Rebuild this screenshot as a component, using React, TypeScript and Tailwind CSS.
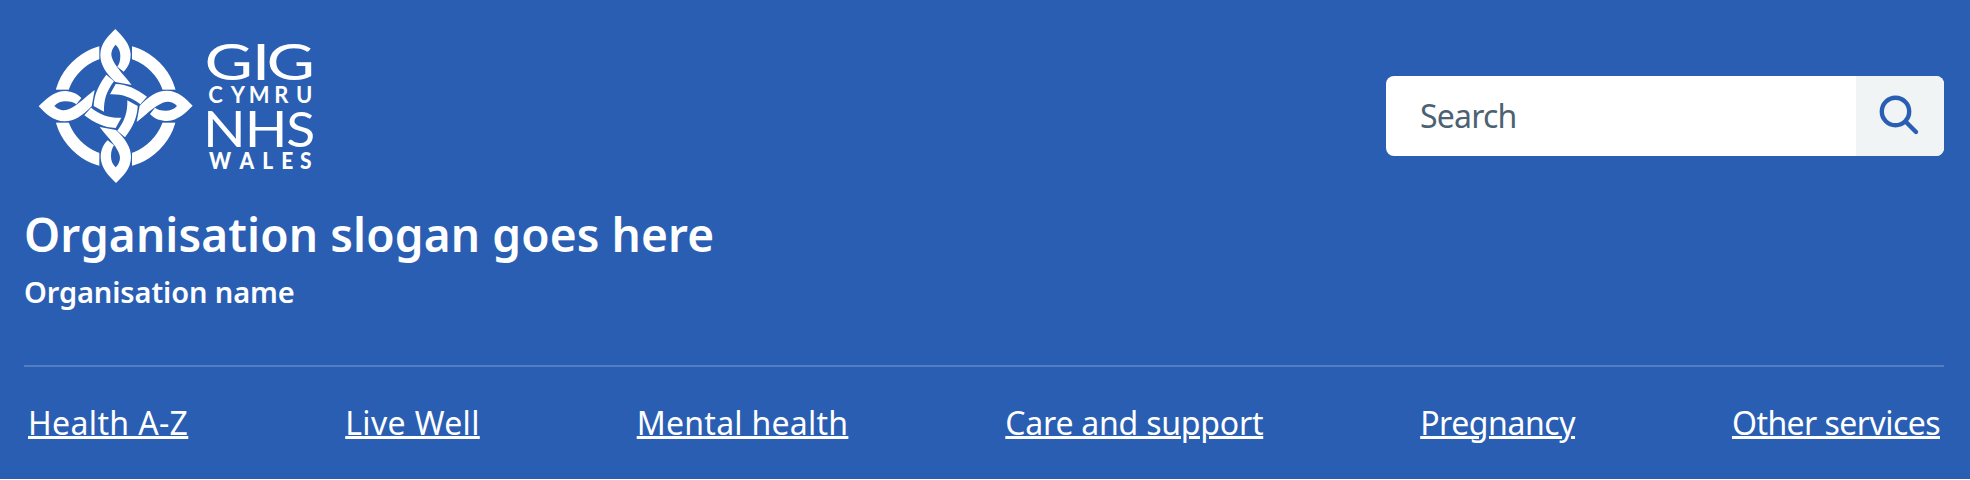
const links = [
  { label: "Health A-Z", tracking: "tracking-[0.36px]" },
  { label: "Live Well", tracking: "tracking-[0.36px]" },
  { label: "Mental health", tracking: "tracking-[0.26px]" },
  { label: "Care and support", tracking: "tracking-[-0.22px]" },
  { label: "Pregnancy", tracking: "tracking-[-0.44px]" },
  { label: "Other services", tracking: "tracking-[-0.55px]" },
];

function Petal() {
  return (
    <>
      <path
        d="M286 42 C266 62 241 84 241 120 C241 150 258 174 286 201 L335 210 C322 192 300 170 287 150 C276 132 272 121 275 110 C277 101 281 95 287 89 C297 98 301 110 301 122 C301 138 297 148 292 155 L311 170 C326 156 332 138 332 118 C330 86 308 64 286 42 Z"
        fill="#fff"
      />
      <path d="M270 238 L287 207 C322 208 350 222 381 245 L361 268 C332 246 306 237 270 238 Z" fill="#fff" />
    </>
  );
}

function Logo() {
  return (
    <svg className="h-[180px] w-[310px]" viewBox="0 0 930 540" aria-label="GIG Cymru NHS Wales">
      <circle cx="287" cy="273" r="167" fill="none" stroke="#fff" strokeWidth="37" />
      <g fill="#295eb3">
        <path d="M238 85h98v75h-98z" />
        <path d="M238 386h98v75h-98z" />
        <path d="M98 224h77v99h-77z" />
        <path d="M400 224h77v99h-77z" />
      </g>
      <Petal />
      <g transform="rotate(90 287 273)"><Petal /></g>
      <g transform="rotate(180 287 273)"><Petal /></g>
      <g transform="rotate(270 287 273)"><Petal /></g>
      <g fill="#fff" fontFamily="Lato, sans-serif">
        <text transform="scale(1.3 1)" x="426 535 569" y="196" fontSize="153">GIG</text>
        <text x="565 632 686 763 828" y="264" fontSize="66" fontWeight="700">CYMRU</text>
        <text transform="scale(1.12 1)" x="490 602" y="397" fontSize="150">
          NH<tspan x="713" y="395" fontSize="143">S</tspan>
        </text>
        <text transform="scale(0.95 1)" x="597 693 765 825 884" y="463" fontSize="66" fontWeight="900">WALES</text>
      </g>
    </svg>
  );
}

export default function App() {
  return (
    <div className="h-[480px] bg-white font-['Noto_Sans',sans-serif]">
      <header className="flex h-[479px] flex-col bg-[#295eb3] pr-[26px] pl-6 text-white">
        <div className="flex h-[367px] justify-between border-b-2 border-[#547ec2]">
          <div className="flex flex-col pt-[15px]">
            <div className="-ml-1 h-[180px]"><Logo /></div>
            <h1 className="mt-[13px] text-[46px] leading-[52px] font-semibold tracking-[0.12px] whitespace-nowrap">
              Organisation slogan goes here
            </h1>
            <p className="mt-[14px] text-[29px] leading-[36px] font-semibold tracking-[-0.1px] whitespace-nowrap">
              Organisation name
            </p>
          </div>
          <div className="mt-[76px] flex h-20 w-[558px] overflow-hidden rounded-lg bg-white">
            <div className="flex flex-1 items-center pb-px pl-[34px] text-[32px] tracking-[-0.8px] text-[#4c6272]">
              Search
            </div>
            <button className="flex w-[88px] items-center justify-center bg-[#f0f4f5]" aria-label="Search">
              <svg className="h-20 w-[88px]" viewBox="0 0 88 80" fill="none" stroke="#295eb3" strokeLinecap="round">
                <circle cx="39.5" cy="35.5" r="13.7" strokeWidth="4.4" />
                <path d="M49.5 45.5 60 56" strokeWidth="4.4" />
              </svg>
            </button>
          </div>
        </div>
        <nav className="flex h-28 items-start justify-between px-1 pt-[34px]">
          {links.map((l) => (
            <a
              key={l.label}
              className={`text-[32px] leading-[44px] whitespace-nowrap underline decoration-[3px] underline-offset-1 ${l.tracking}`}
            >
              {l.label}
            </a>
          ))}
        </nav>
      </header>
    </div>
  );
}
